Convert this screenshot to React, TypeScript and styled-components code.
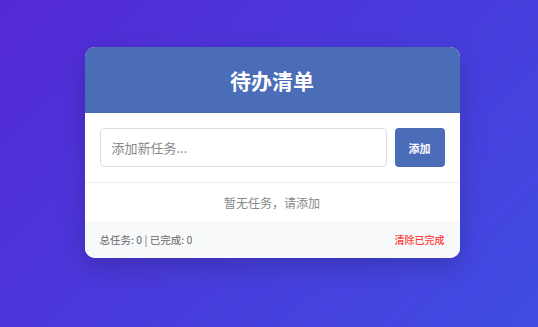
import styled, { createGlobalStyle } from "styled-components";

const Global = createGlobalStyle`
    html, body {
        margin: 0;
        padding: 0;
        height: 100%;
    }
    body {
        font-family: "Noto Sans CJK SC", "Noto Sans", sans-serif;
    }
    #root {
        height: 100%;
    }
`;

const Page = styled.div`
    width: 538px;
    height: 327px;
    background: linear-gradient(135deg, #5429d4 0%, #3f4ce2 100%);
    display: flex;
    justify-content: center;
    padding: 47px 0 0 6px;
    box-sizing: border-box;
`;

const Card = styled.div`
    width: 375px;
    height: 211px;
    background: #fff;
    border-radius: 10px;
    overflow: hidden;
    box-shadow: 0 8px 24px rgba(0, 0, 0, 0.18);
    display: flex;
    flex-direction: column;
`;

const Header = styled.div`
    height: 66px;
    background: #4b6cb7;
    display: flex;
    align-items: center;
    justify-content: center;
    color: #fff;
    font-size: 21px;
    font-weight: 700;
`;

const InputRow = styled.div`
    display: flex;
    gap: 8px;
    padding: 15px;
    border-bottom: 1px solid #eee;
`;

const Input = styled.input`
    flex: 1;
    height: 39px;
    box-sizing: border-box;
    border: 1px solid #ddd;
    border-radius: 4px;
    padding: 0 11px;
    font-family: inherit;
    font-size: 13px;
    outline: none;
    &::placeholder {
        color: #888;
    }
`;

const AddButton = styled.button`
    width: 50px;
    height: 39px;
    border: none;
    border-radius: 4px;
    background: #4b6cb7;
    color: #fff;
    font-family: inherit;
    font-size: 11px;
    font-weight: 700;
`;

const Empty = styled.div`
    height: 38px;
    display: flex;
    align-items: center;
    justify-content: center;
    color: #888;
    font-size: 12px;
`;

const Footer = styled.div`
    flex: 1;
    background: #f8f9fa;
    display: flex;
    align-items: center;
    justify-content: space-between;
    padding: 0 15px;
    font-size: 10.5px;
    color: #666;
`;

const Clear = styled.span<{ $color: string }>`
    color: ${(p) => p.$color};
    font-size: 10px;
    font-weight: 500;
`;

export default function App() {
    return (
        <>
            <Global />
            <Page>
                <Card>
                    <Header>待办清单</Header>
                    <InputRow>
                        <Input placeholder="添加新任务..." />
                        <AddButton>添加</AddButton>
                    </InputRow>
                    <Empty>暂无任务，请添加</Empty>
                    <Footer>
                        <span>总任务: 0 | 已完成: 0</span>
                        <Clear $color="#ff3b3b">清除已完成</Clear>
                    </Footer>
                </Card>
            </Page>
        </>
    );
}
